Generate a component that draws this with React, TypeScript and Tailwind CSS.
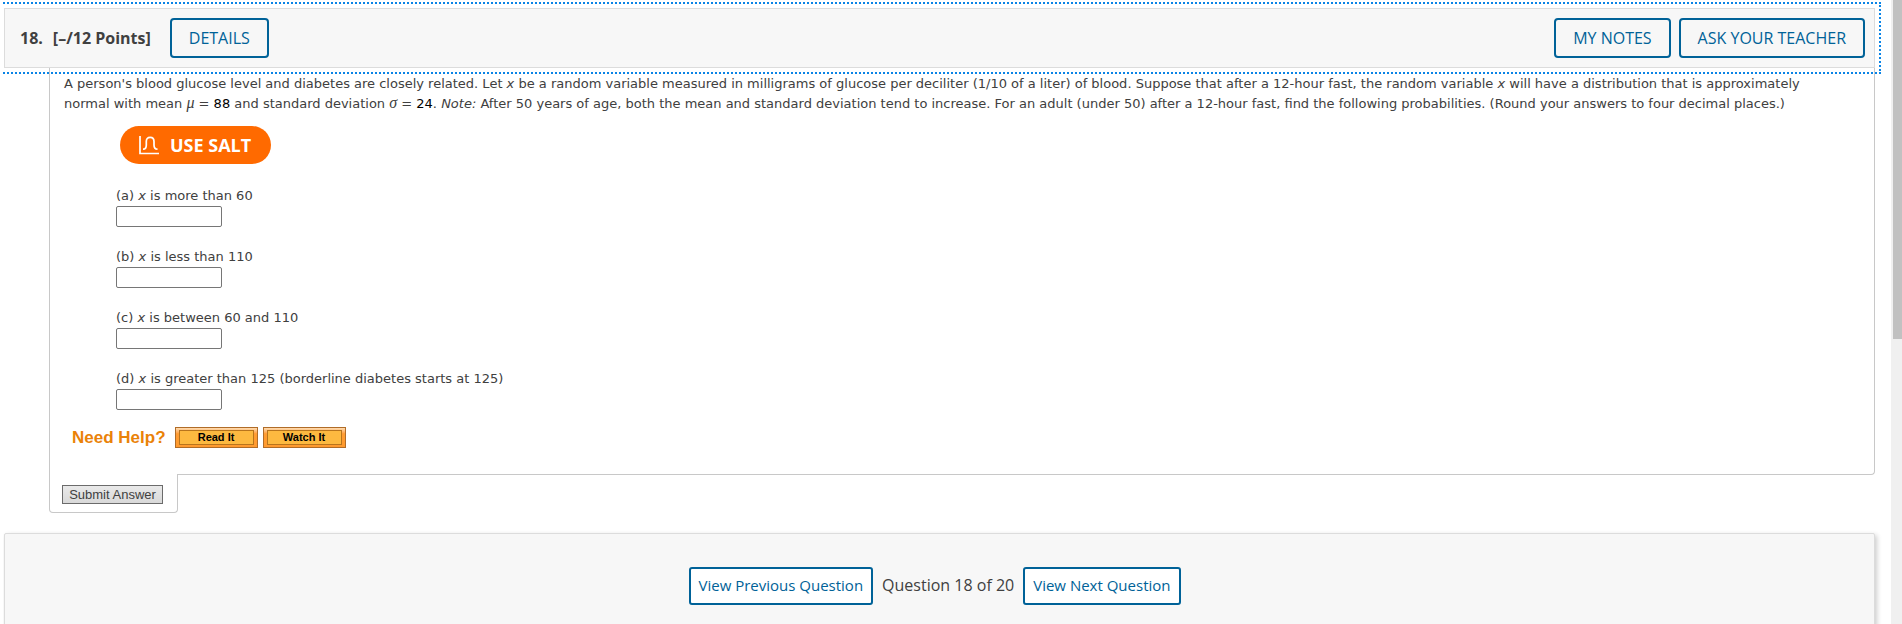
import { useState } from "react";

interface Part {
  id: string;
  text: string;
}

const parts: Part[] = [
  { id: "a", text: "is more than 60" },
  { id: "b", text: "is less than 110" },
  { id: "c", text: "is between 60 and 110" },
  { id: "d", text: "is greater than 125 (borderline diabetes starts at 125)" },
];

function HeaderButton({ label }: { label: string }) {
  return (
    <button className="h-10 rounded-[4px] border-2 border-[#006298] px-[17px] text-base text-[#006298]">
      {label}
    </button>
  );
}

function NavButton({ label }: { label: string }) {
  return (
    <button className="h-[38px] rounded-[3px] border-2 border-[#006298] bg-white px-2 pb-px text-[15px] text-[#006298]">
      {label}
    </button>
  );
}

function HelpButton({ label }: { label: string }) {
  return (
    <button className="h-[21px] w-[83px] border border-[#b06c28] bg-linear-to-b from-[#ffdcb0] via-[#ff9d33] via-30% to-[#ff9a2e] px-[3px] py-[2px]">
      <span className="flex h-[15px] items-center justify-center border border-[#b8741c] bg-[#fdb940] text-[11px] leading-none font-bold text-black">
        {label}
      </span>
    </button>
  );
}

export default function App() {
  const [answers, setAnswers] = useState<Record<string, string>>({});

  return (
    <div className="flex h-screen overflow-hidden bg-white font-['Open_Sans',sans-serif] text-[#404040]">
      <div className="ml-[3px] min-w-0 flex-1 overflow-hidden pt-2 pr-4 pl-px">
        {/* question header, focused */}
        <header className="relative z-10 flex h-[60px] items-center justify-between border border-[#dcdcdc] bg-[#f7f7f7] px-[9px] outline-2 outline-offset-4 outline-[#0a84e6] outline-dotted">
          <div className="flex items-center pl-[6px] font-bold">
            <span className="mr-[10px]">18.</span>
            <span className="mr-[19px]">[–/12 Points]</span>
            <span className="font-normal">
              <HeaderButton label="DETAILS" />
            </span>
          </div>
          <div className="flex gap-2">
            <HeaderButton label="MY NOTES" />
            <HeaderButton label="ASK YOUR TEACHER" />
          </div>
        </header>

        <main className="ml-[45px] font-[Verdana,'DejaVu_Sans',sans-serif] text-[13px] leading-5">
          <div className="rounded-br-[4px] border-r border-b border-l border-[#c8c8c8] pt-[6px] pb-[26px] pl-[14px]">
            <p className="whitespace-nowrap">
              A person's blood glucose level and diabetes are closely related. Let <i>x</i> be a
              random variable measured in milligrams of glucose per deciliter (1/10 of a liter) of
              blood. Suppose that after a 12-hour fast, the random variable <i>x</i> will have a
              distribution that is approximately
              <br />
              normal with mean <i className="font-['Liberation_Serif',serif] text-base leading-none">μ</i> ={" "}
              <span className="text-black">88</span> and standard deviation{" "}
              <i className="font-['Liberation_Serif',serif] text-base leading-none">σ</i> ={" "}
              <span className="text-black">24</span>. <i>Note:</i> After 50 years of age, both the
              mean and standard deviation tend to increase. For an adult (under 50) after a 12-hour
              fast, find the following probabilities. (Round your answers to four decimal places.)
            </p>

            <button className="mt-3 ml-14 flex h-[38px] w-[151px] items-center gap-[11px] rounded-full bg-[#ff6a00] pl-[19px] font-['Open_Sans',sans-serif] text-lg font-bold text-white">
              <svg width="20" height="19" viewBox="0 0 20 19" fill="none" stroke="white" strokeWidth="1.7">
                <path d="M1 0V17.5H20" />
                <path d="M4 13.2C6.5 13.2 7.3 12 7.3 9V5.5C7.3 3 8.5 1.3 11.2 1.3S15 3 15 5.5V9C15 12 16 13.2 18.5 13.2" />
              </svg>
              USE SALT
            </button>

            <div className="mt-[22px] ml-[52px] flex flex-col gap-5">
              {parts.map((p) => (
                <div key={p.id} className="flex h-[41px] flex-col items-start">
                  <label htmlFor={p.id}>
                    ({p.id}) <i>x</i> {p.text}
                  </label>
                  <input
                    id={p.id}
                    type="text"
                    value={answers[p.id] ?? ""}
                    onChange={(e) => setAnswers({ ...answers, [p.id]: e.target.value })}
                    className="h-[21px] w-[106px] rounded-xs border border-[#767676] px-1"
                  />
                </div>
              ))}
            </div>

            <div className="mt-[17px] ml-2 flex items-center font-['Liberation_Sans',sans-serif]">
              <span className="mr-[9px] text-[17px] font-bold text-[#ea8208]">Need Help?</span>
              <div className="flex gap-[5px]">
                <HelpButton label="Read It" />
                <HelpButton label="Watch It" />
              </div>
            </div>
          </div>

          {/* tab hanging off the panel, covers its bottom border */}
          <div className="relative -mt-px flex h-[39px] w-[129px] rounded-b-[4px] border-r border-b border-l border-[#c8c8c8] bg-white pt-[11px] pl-3">
            <button className="h-[19px] w-[101px] border border-[#6b6b6b] bg-linear-to-b from-[#e9e9e9] to-[#d9d9d9] font-['Liberation_Sans',sans-serif] text-[13px] leading-none">
              Submit Answer
            </button>
          </div>
        </main>

        <footer className="mt-5 flex h-[120px] items-start justify-center gap-[9px] rounded-xs border border-[#dcdcdc] bg-[#f7f7f7] pt-[33px] pr-[10px] shadow-[2px_2px_5px_rgba(0,0,0,0.2)]">
          <NavButton label="View Previous Question" />
          <span className="leading-9">Question 18 of 20</span>
          <NavButton label="View Next Question" />
        </footer>
      </div>

      {/* scrollbar */}
      <div className="w-[11px] bg-[#f0f0f0] pl-[2px]">
        <div className="h-[339px] bg-[#c1c1c1]" />
      </div>
    </div>
  );
}
